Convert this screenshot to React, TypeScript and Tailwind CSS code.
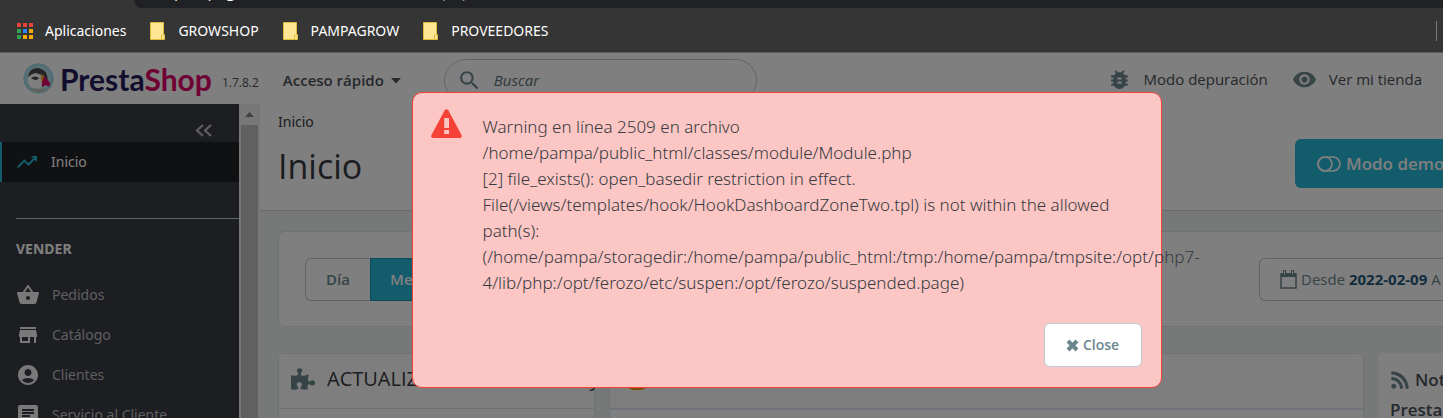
import React from "react";
import { FaPuzzlePiece, FaRss } from "react-icons/fa";
import {
  MdAccountCircle,
  MdBugReport,
  MdChat,
  MdRemoveRedEye,
  MdSearch,
  MdShoppingBasket,
  MdStore,
  MdTrendingUp,
} from "react-icons/md";

const bookmarks = ["GROWSHOP", "PAMPAGROW", "PROVEEDORES"];

const menu = [
  { label: "Pedidos", icon: <MdShoppingBasket size={24} /> },
  { label: "Catálogo", icon: <MdStore size={24} /> },
  { label: "Clientes", icon: <MdAccountCircle size={24} /> },
  { label: "Servicio al Cliente", icon: <MdChat size={24} /> },
];

export default function App() {
  return (
    <div className="flex h-screen min-w-0 flex-col overflow-hidden bg-[#353535] font-['Open_Sans','Noto_Sans',sans-serif]">
      <BrowserBar />
      <div className="relative flex min-h-0 flex-1 flex-col overflow-hidden">
        <Header />
        <div className="flex min-h-0 flex-1 overflow-hidden">
          <Sidebar />
          <Dashboard />
        </div>
        {/* Backdrop */}
        <div className="absolute inset-0 flex items-start justify-center bg-black/50 pt-10">
          <WarningDialog />
        </div>
      </div>
    </div>
  );
}

const BrowserBar = () => (
  <div className="shrink-0 border-b border-[#5d5d5d]">
    <div className="flex h-2 pl-[134px]">
      {/* Only the bottom edge of the address bar is on screen */}
      <div className="flex h-2 flex-1 items-start overflow-hidden rounded-bl-2xl bg-[#202124] pl-10">
        <span className="-mt-[19px] whitespace-nowrap text-base leading-5 text-white">
          pampagrow.com.ar<span className="text-[#9aa0a6]">/admin71/index.php</span>
        </span>
      </div>
    </div>
    <nav className="flex h-11 items-center px-4 pt-0.5 text-white">
      <a href="#apps" className="flex items-center gap-[11px]">
        <AppsIcon />
        <span className="font-['Noto_Sans',sans-serif] text-sm">Aplicaciones</span>
      </a>
      {bookmarks.map((name) => (
        <a key={name} href={`#${name}`} className="ml-6 flex items-center gap-2.5">
          <FolderIcon />
          <span className="font-['Noto_Sans',sans-serif] text-sm">{name}</span>
        </a>
      ))}
      <span className="-mr-[10px] ml-auto h-5 w-px bg-[#777]" />
    </nav>
  </div>
);

const Header = () => (
  <header className="flex h-[51px] shrink-0 items-center bg-white pl-[23px] pr-[21px] text-[#4b5058]">
    <a href="#home" className="flex items-center gap-1.5">
      <PuffinLogo />
      <span className="font-['Lato',sans-serif] text-[30px] font-bold leading-8 text-[#251b5b]">
        Presta<span className="text-[#df0067]">Shop</span>
      </span>
    </a>
    <span className="ml-[10px] mt-2 text-xs">1.7.8.2</span>
    <button className="ml-6 mt-1 flex items-center gap-1.5 text-[15px] font-semibold">
      Acceso rápido
      <svg width="12" height="6" viewBox="0 0 12 6"><path d="M1 0h10L6 5.500z" fill="currentColor" /></svg>
    </button>
    <label className="ml-[42px] mt-1 flex h-[43px] w-[313px] items-center gap-3 rounded-full border border-[#bbcdd2] pl-3 text-[#6c868e]">
      <MdSearch size={25} />
      <input aria-label="Buscar" placeholder="Buscar" className="w-52 bg-transparent text-[15px] italic outline-none placeholder:text-[#5c6f76]" />
    </label>
    <a href="#debug" className="ml-auto mt-0.5 flex items-center gap-3 text-[15px]">
      <MdBugReport size={25} className="text-[#6c868e]" />
      Modo depuración
    </a>
    <a href="#shop" className="ml-6 mt-0.5 flex items-center gap-3 text-[15px]">
      <MdRemoveRedEye size={25} className="text-[#6c868e]" />
      Ver mi tienda
    </a>
  </header>
);

const Sidebar = () => (
  <aside className="flex w-[260px] shrink-0">
    <nav className="flex-1 overflow-hidden bg-[#3a3d44] font-['Noto_Sans',sans-serif] text-sm text-[#bebebe]">
      <div className="flex h-[38px] items-start justify-end pr-[26px] pt-5">
        <button aria-label="Contraer menú" className="flex">
          <svg width="18" height="13" viewBox="0 0 18 13" fill="none" stroke="#bebebe" strokeWidth="2.200"><path d="M8 1 2 6.500 8 12M16 1l-6 5.500L16 12" /></svg>
        </button>
      </div>
      <a href="#inicio" className="flex h-10 items-center gap-3 border-l-2 border-[#25b9d7] bg-[#202226] pl-[13px] text-white">
        <MdTrendingUp size={24} className="text-[#25b9d7]" />
        Inicio
      </a>
      <div className="ml-4 mt-9 border-t border-[#bbcdd2]" />
      <h2 className="ml-4 mt-5 text-sm font-bold leading-5 text-white">VENDER</h2>
      <ul className="mt-4">
        {menu.map((item) => (
          <li key={item.label}>
            <a href={`#${item.label}`} className="flex h-10 items-center gap-3 pl-4">
              <span className="text-[#f2f2f2]">{item.icon}</span>
              {item.label}
            </a>
          </li>
        ))}
      </ul>
    </nav>
    {/* Scrollbar */}
    <div className="flex w-[21px] flex-col bg-[#f1f1f1]">
      <div className="flex h-[21px] items-center justify-center">
        <svg width="9" height="5" viewBox="0 0 9 5"><path d="M0 5h9L4.500 0z" fill="#808080" /></svg>
      </div>
      <div className="mx-0.5 flex-1 bg-[#c1c1c1]" />
    </div>
  </aside>
);

const Dashboard = () => (
  <main className="flex min-w-0 flex-1 flex-col overflow-hidden bg-[#eff1f1]">
    <div className="flex h-[107px] shrink-0 justify-between border-b border-[#d3d8db] bg-white pl-[18px] text-[#363a41]">
      <div>
        <div className="mt-2 font-['Noto_Sans',sans-serif] text-sm leading-5">Inicio</div>
        <h1 className="mt-3 text-[34px] leading-[44px]">Inicio</h1>
      </div>
      <button className="mt-[35px] flex h-[49px] w-[148px] items-center gap-[5px] overflow-hidden whitespace-nowrap rounded-l-md bg-[#25b9d7] pl-[22px] text-[17px] font-semibold text-white">
        <svg className="shrink-0" width="24" height="16" viewBox="0 0 24 16" fill="none" stroke="currentColor" strokeWidth="1.700"><rect x="1" y="1" width="22" height="14" rx="7" /><circle cx="8" cy="8" r="7" /></svg>
        Modo demo
      </button>
    </div>
    <div className="ml-[18px] mt-5 flex h-24 shrink-0 items-center justify-between rounded-l-md border border-r-0 border-[#dbe6e9] bg-white pl-[26px]">
      <div className="flex h-[43px] text-[15px] font-semibold">
        <button className="w-[65px] rounded-l-md border border-r-0 border-[#bbcdd2] text-[#6c868e]">Día</button>
        <button className="w-[70px] border border-[#1e94ab] bg-[#25b9d7] text-white">Mes</button>
      </div>
      <button className="flex h-[43px] w-[184px] items-center gap-1 overflow-hidden whitespace-nowrap rounded-l-md border border-r-0 border-[#bbcdd2] pl-5 text-[15px] text-[#6c868e]">
        <svg className="shrink-0" width="17" height="19" viewBox="0 0 17 19"><path d="M1 4h15v14H1z" fill="none" stroke="currentColor" strokeWidth="1.500" /><path d="M1 3h15v4H1z" fill="currentColor" /><path d="M4.500 0v5M12.500 0v5" stroke="currentColor" strokeWidth="3" /><path d="M4.500 1v3M12.500 1v3" stroke="#fff" /></svg>
        <span>Desde <strong className="text-[#25597d]">2022-02-09</strong> A</span>
      </button>
    </div>
    <div className="ml-[18px] mt-[26px] flex min-h-0 flex-1 gap-3.5">
      <section className="w-[317px] shrink-0 rounded-t-md border border-b-0 border-[#dbe6e9] bg-white">
        <h2 className="flex h-[55px] items-center gap-3 whitespace-nowrap border-b border-[#dbe6e9] bg-[#fdfdfd] pb-1 pl-3 text-xl text-[#363a41]">
          <FaPuzzlePiece size={24} className="shrink-0 text-[#6c868e]" />
          ACTUALIZACIÓN MÓDULOS y
        </h2>
      </section>
      <section className="min-w-0 flex-1 rounded-t-md border border-b-0 border-[#dbe6e9] bg-white">
        <div className="flex h-14 items-center border-b-2 border-[#dbe6f0] bg-[#fdfdfd] pb-1 pl-4">
          <span className="size-[22px] rounded-lg bg-[#f59a1a]" />
        </div>
      </section>
      <section className="w-[65px] shrink-0 overflow-hidden rounded-tl-md bg-white pl-3 pt-3 text-[17px] font-semibold leading-[30px] text-[#4b5058]">
        <div className="flex items-center gap-[5px] whitespace-nowrap">
          <FaRss size={20} className="shrink-0 text-[#6c868e]" />
          Noticias
        </div>
        PrestaShop
      </section>
    </div>
  </main>
);

const WarningDialog = () => (
  <div role="alertdialog" aria-label="Warning" className="-mt-px ml-[130px] w-[750px] rounded-[10px] border border-[#f44336] bg-[#fbc6c3] px-[18px] pb-5 pt-4">
    <div className="flex">
      <svg className="shrink-0" width="31" height="29" viewBox="0 0 31 29"><path d="M13.700 1.200q1.800-2 3.600 0L30.500 26q.8 2.500-1.500 3H2q-2.500-.5-1.500-3z" fill="#f44336" /><path d="M13.200 9h4.800v10h-4.800zM13.200 21h4.800v4h-4.800z" fill="#fbc6c3" /></svg>
      <p className="ml-[21px] mt-[5px] w-[640px] whitespace-nowrap font-['Noto_Sans',sans-serif] text-[17px] font-light leading-[26px] text-[#363a41]">
        Warning en línea 2509 en archivo<br />
        /home/pampa/public_html/classes/module/Module.php<br />
        [2] file_exists(): open_basedir restriction in effect.<br />
        File(/views/templates/hook/HookDashboardZoneTwo.tpl) is not within the allowed<br />
        path(s):<br />
        (/home/pampa/storagedir:/home/pampa/public_html:/tmp:/home/pampa/tmpsite:/opt/php7-<br />
        4/lib/php:/opt/ferozo/etc/suspen:/opt/ferozo/suspended.page)
      </p>
    </div>
    <div className="mt-[27px] flex justify-end">
      <button className="mr-px flex h-11 w-[98px] items-center justify-center gap-1 rounded-md border border-[#bbcdd2] bg-white text-sm font-semibold text-[#6c868e]">
        <svg width="13" height="13" viewBox="0 0 13 13"><path d="m2 2 9 9m0-9-9 9" stroke="currentColor" strokeWidth="4" /></svg>
        Close
      </button>
    </div>
  </div>
);

const appColors = [
  "#e94335", "#e94335", "#e94335",
  "#34a052", "#2a85f4", "#f9ab00",
  "#34a052", "#f9ab00", "#f9ab00",
];

const AppsIcon = () => (
  <svg width="18" height="18" viewBox="0 0 18 18">
    {appColors.map((color, i) => (
      <rect key={i} x={1 + (i % 3) * 6} y={1 + Math.floor(i / 3) * 6} width="4" height="4" fill={color} />
    ))}
  </svg>
);

const FolderIcon = () => (
  <svg width="18" height="20" viewBox="0 0 18 20">
    <path d="M.5 1.500h13v12h1v5H.5z" fill="#ffe694" stroke="#e1bd3c" />
    <path d="M11.500 18v-4h2" fill="none" stroke="#e1bd3c" />
  </svg>
);

const PuffinLogo = () => (
  <svg width="31" height="31" viewBox="0 0 31 31">
    <circle cx="15.500" cy="15.500" r="15" fill="#a4dbe8" />
    <circle cx="15.500" cy="15.500" r="11.800" fill="#b8e3ec" />
    <path d="M5 14Q6 5 15 5q9 1 10 12l-6-5-7-2z" fill="#4b4b4f" />
    <path d="M5 15q4-6 11-4l5 5q0 6-5 10l-8-2q-4-4-3-9z" fill="#fff" />
    <path d="M8 15q4-3 8 0-3 4-8 0z" fill="#4b4b4f" />
    <path d="M20 14q2-1 3 1l5 6q0 3-1 4l-4-3-4 2q-1-5 1-10z" fill="#df0067" />
    <path d="M18 11q3 1 3 3l-2 6q-2-4-1-9z" fill="#f8b334" />
    <path d="M6 25q9 3 19 0-3 5-10 5-6 0-9-5z" fill="#d3b99b" />
    <circle cx="15.500" cy="15.500" r="14" fill="none" stroke="#a4dbe8" strokeWidth="2" />
  </svg>
);
